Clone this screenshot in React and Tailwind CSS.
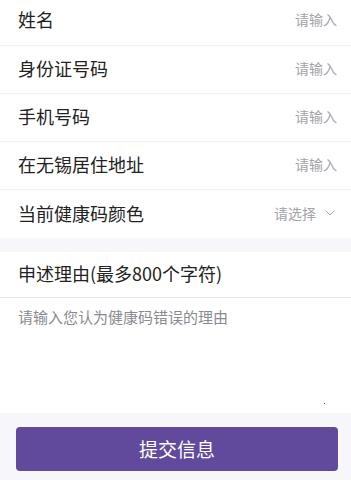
import React from 'react';
import { ChevronDown } from 'lucide-react';

const fields = ['身份证号码', '手机号码', '在无锡居住地址'];

const Row = ({ label, hint, first }) => (
  <div
    className={`flex items-center justify-between pl-[18px] pr-[14px] border-b border-[#f0f0f2] ${
      first ? 'h-[46px] pb-[6px]' : 'h-[48px] pb-[2px]'
    }`}
  >
    <span className="text-[18px] text-[#222]">{label}</span>
    <span className="text-[14px] text-[#a3a3a8]">{hint}</span>
  </div>
);

const App = () => {
  return (
    <div
      className="w-[351px] h-[480px] overflow-hidden bg-[#f7f6fa]"
      style={{ fontFamily: '"Noto Sans CJK SC", "Noto Sans", sans-serif' }}
    >
      <div className="bg-white">
        <Row label="姓名" hint="请输入" first />
        {fields.map((f) => (
          <Row key={f} label={f} hint="请输入" />
        ))}
        <div className="flex items-center justify-between pl-[18px] pr-[13px] h-[48px] pb-[2px]">
          <span className="text-[18px] text-[#222]">当前健康码颜色</span>
          <span className="flex items-center gap-[6px] text-[14px] text-[#a3a3a8]">
            请选择
            <ChevronDown size={16} strokeWidth={1.5} className="text-[#a8a8b0]" />
          </span>
        </div>
      </div>

      <div className="h-[14px]" />

      <div className="bg-white">
        <div className="h-[46px] flex items-center pl-[18px] pb-[2px] border-b border-[#e6e6ea]">
          <span className="text-[18px] text-[#222]">申述理由(最多800个字符)</span>
        </div>
        <div className="relative h-[115px] px-[18px] pt-[8px]">
          <p className="text-[15px] text-[#8a8a90]">请输入您认为健康码错误的理由</p>
          <span className="absolute right-[26px] bottom-[9px] w-[1px] h-[1px] bg-[#555]" />
        </div>
      </div>

      <div className="pl-[16px] pr-[13px] pt-[14px]">
        <button className="w-full h-[44px] rounded-[4px] bg-[#614a9c] text-white text-[19px]">
          提交信息
        </button>
      </div>
    </div>
  );
};

export default App;
